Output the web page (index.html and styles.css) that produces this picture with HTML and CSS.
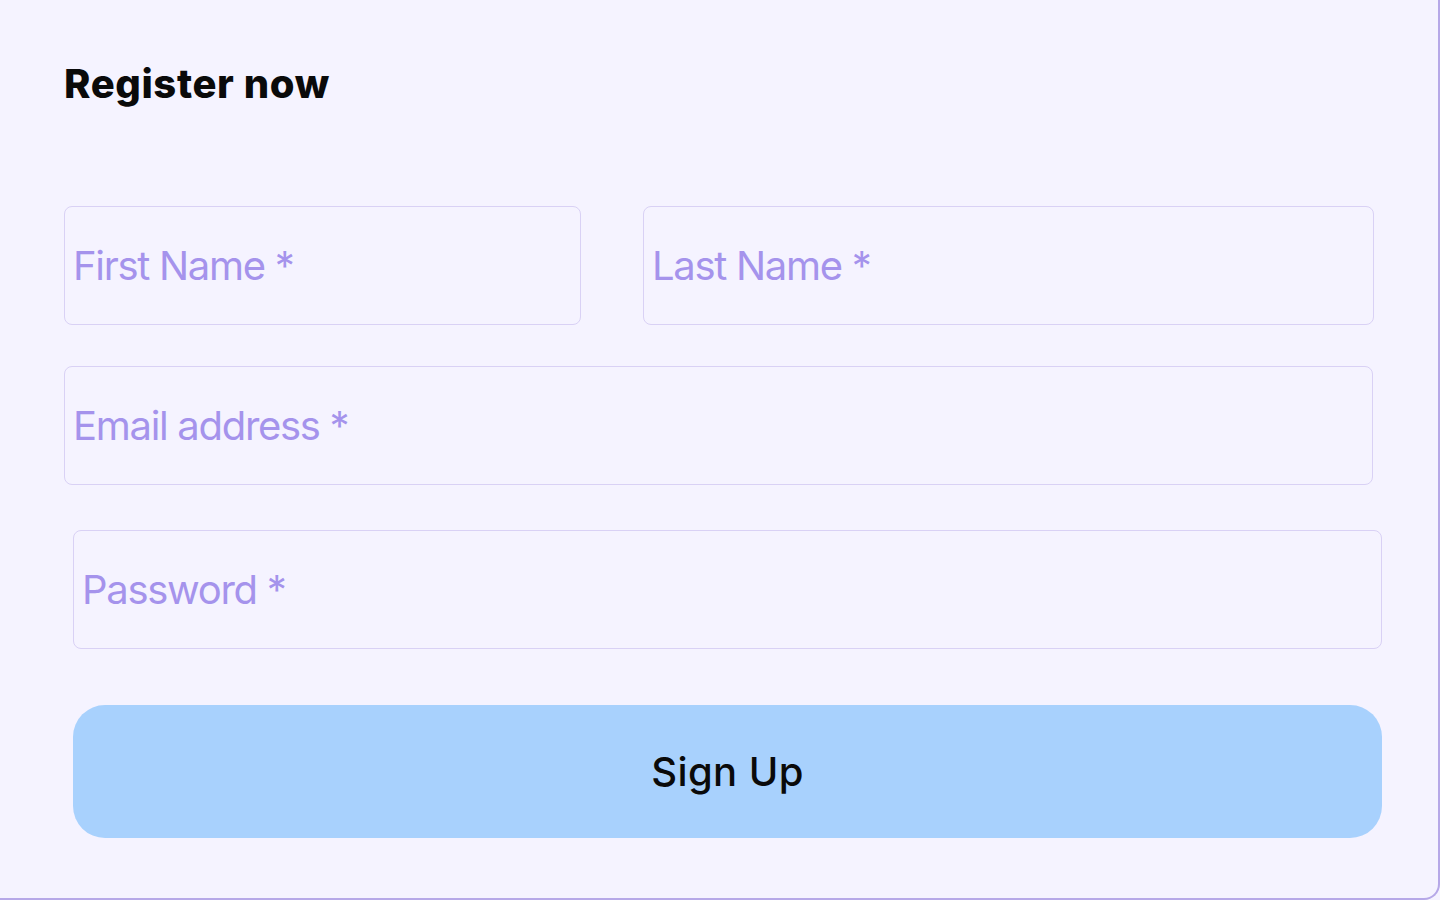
FILE: index.html
```html
<!DOCTYPE html>
<html lang="en">
<head>
<meta charset="utf-8">
<title>Register now</title>
<link rel="stylesheet" href="styles.css">
</head>
<body>
<div class="card">
  <h1 class="title">Register now</h1>
  <form class="form">
    <div class="row">
      <input class="field first" type="text" placeholder="First Name *">
      <input class="field last" type="text" placeholder="Last Name *">
    </div>
    <input class="field email" type="email" placeholder="Email address *">
    <input class="field password" type="password" placeholder="Password *">
    <button class="submit" type="button">Sign Up</button>
  </form>
</div>
</body>
</html>
```
FILE: styles.css
```css
html, body {
  margin: 0;
  padding: 0;
  background: #f5f3ff;
}
.card {
  box-sizing: border-box;
  width: 1440px;
  height: 900px;
  background: #f5f3ff;
  border-right: 2px solid #b6a8e8;
  border-bottom: 2px solid #b6a8e8;
  border-bottom-right-radius: 16px;
  padding: 57px 0 0 64px;
  overflow: hidden;
}
.title {
  margin: 0;
  font-family: "Inter", "Liberation Sans", sans-serif;
  font-weight: 800;
  font-size: 40px;
  line-height: 54px;
  color: #0a0a0a;
  letter-spacing: 0.6px;
}
.form {
  display: flex;
  flex-direction: column;
  align-items: flex-start;
  margin-top: 95px;
}
.row {
  display: flex;
  gap: 62px;
}
.field {
  box-sizing: border-box;
  height: 119px;
  padding: 0 0 0 8px;
  border: 1px solid #d9d1f5;
  border-radius: 8px;
  background: transparent;
  font-family: "Inter", "Liberation Sans", sans-serif;
  font-size: 40px;
  letter-spacing: -1.3px;
  color: #6d55d8;
  outline: none;
}
.field::placeholder {
  color: #a593ec;
  opacity: 1;
}
.first { width: 517px; }
.last { width: 731px; }
.email {
  width: 1309px;
  margin-top: 41px;
}
.password {
  width: 1309px;
  margin-top: 45px;
  margin-left: 9px;
}
.submit {
  width: 1309px;
  height: 133px;
  margin-top: 56px;
  margin-left: 9px;
  border: none;
  border-radius: 32px;
  background: #a8d1fd;
  font-family: "Inter", "Liberation Sans", sans-serif;
  font-weight: 500;
  font-size: 40px;
  letter-spacing: 0.4px;
  color: #0a0a0a;
  cursor: pointer;
}
```
